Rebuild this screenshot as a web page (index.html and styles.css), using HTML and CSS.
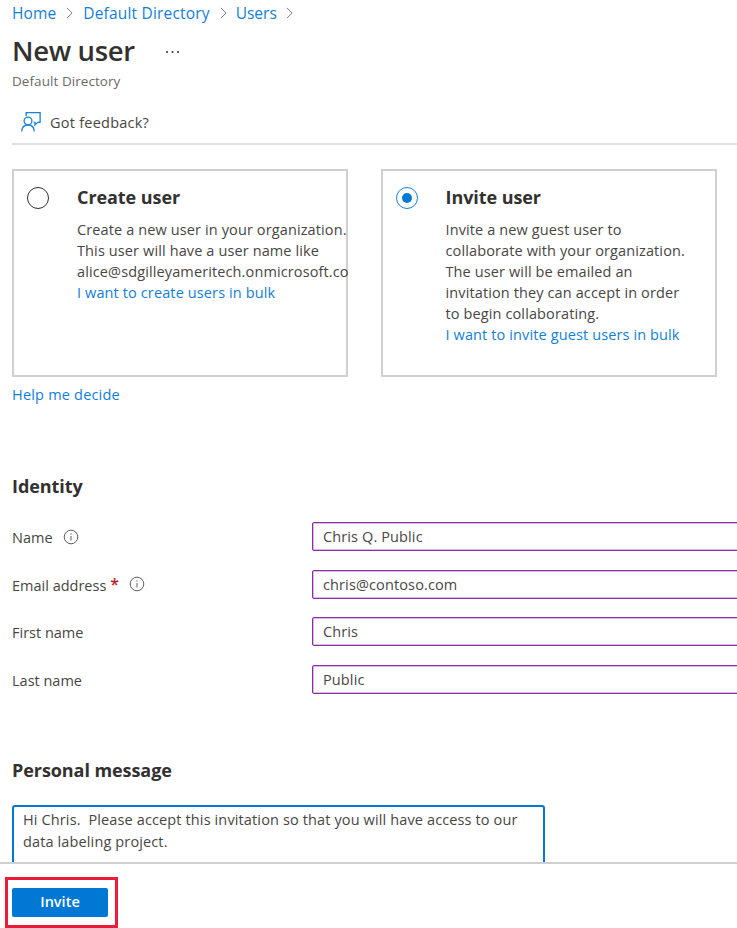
FILE: index.html
```html
<!DOCTYPE html>
<html lang="en">
<head>
<meta charset="utf-8">
<title>New user</title>
<link rel="stylesheet" href="styles.css">
</head>
<body>
<div class="page">
  <main class="content">
    <nav class="breadcrumb">
      <a href="#">Home</a>
      <svg class="chevron" viewBox="0 0 8 14"><path d="M1 1l6 6-6 6"/></svg>
      <a class="crumb-dir" href="#">Default Directory</a>
      <svg class="chevron" viewBox="0 0 8 14"><path d="M1 1l6 6-6 6"/></svg>
      <a class="crumb-users" href="#">Users</a>
      <svg class="chevron" viewBox="0 0 8 14"><path d="M1 1l6 6-6 6"/></svg>
    </nav>
    <header class="heading">
      <h1>New user</h1>
      <svg class="more" viewBox="0 0 16 4"><circle cx="2" cy="2" r="1"/><circle cx="7.5" cy="2" r="1"/><circle cx="13" cy="2" r="1"/></svg>
    </header>
    <p class="subtitle"><span>Default Directory</span></p>
    <div class="toolbar">
      <svg class="feedback-icon" viewBox="0 0 20 20"><path d="M5.200 4V.7h13.900v9.600h-2.200l-2.900 2.600v-2.600h-1.300"/><circle cx="7" cy="9" r="3.900"/><path d="M.7 19.500c.2-4 2.600-6.500 6.300-6.500s6.100 2.500 6.300 6.500"/></svg>
      <span>Got feedback?</span>
    </div>

    <section class="choices">
      <div class="card">
        <span class="radio"></span>
        <div class="card-body">
          <h2>Create user</h2>
          <p>Create a new user in your organization.<br>This user will have a user name like<br>alice@sdgilleyameritech.onmicrosoft.co<br><a href="#">I want to create users in bulk</a></p>
        </div>
      </div>
      <div class="card">
        <span class="radio checked"></span>
        <div class="card-body">
          <h2>Invite user</h2>
          <p>Invite a new guest user to<br>collaborate with your organization.<br>The user will be emailed an<br>invitation they can accept in order<br>to begin collaborating.<br><a href="#">I want to invite guest users in bulk</a></p>
        </div>
      </div>
    </section>
    <div class="help"><a href="#">Help me decide</a></div>

    <h2 class="identity-title">Identity</h2>
    <div class="field">
      <div class="label"><span>Name</span><svg class="info" viewBox="0 0 16 16"><circle cx="8" cy="8" r="6.800"/><path d="M8 7v4.500M8 4.400v1.300"/></svg></div>
      <div class="input">Chris Q. Public</div>
    </div>
    <div class="field">
      <div class="label"><span>Email address</span><span class="required">*</span><svg class="info" viewBox="0 0 16 16"><circle cx="8" cy="8" r="6.800"/><path d="M8 7v4.500M8 4.400v1.300"/></svg></div>
      <div class="input">chris@contoso.com</div>
    </div>
    <div class="field">
      <div class="label">First name</div>
      <div class="input">Chris</div>
    </div>
    <div class="field">
      <div class="label">Last name</div>
      <div class="input">Public</div>
    </div>

    <h2 class="message-title">Personal message</h2>
    <div class="message">Hi Chris.&nbsp; Please accept this invitation so that you will have access to our<br>data labeling project.</div>
  </main>
  <footer class="footer">
    <div class="highlight"><button class="invite" type="button">Invite</button></div>
  </footer>
</div>
</body>
</html>
```
FILE: styles.css
```css
* { box-sizing: border-box; }
body { margin: 0; background: #fff; color: #484644; font: 14.5px/21px "Open Sans", "Noto Sans", sans-serif; letter-spacing: .12px; overflow: hidden; }
h1, h2, p { margin: 0; }
h1, h2 { color: #323130; font-weight: 600; }
h2 { font-size: 18px; line-height: 24px; font-weight: 700; letter-spacing: -.07px; }
a { color: #1280d8; text-decoration: none; }
svg { flex: none; fill: none; overflow: visible; }
span, a, h1, h2, p { white-space: nowrap; }
.page { height: 928px; display: flex; flex-direction: column; }
.content { height: 862px; padding-left: 12px; overflow: hidden; }

.breadcrumb { display: flex; align-items: center; height: 26px; font-size: 15.5px; }
.crumb-dir { letter-spacing: .18px; }
.crumb-users { margin-left: -1px; letter-spacing: 0; }
.chevron { width: 7px; height: 12px; margin: -1px 10px 0; stroke: #777; stroke-width: 1.1; }
.breadcrumb .chevron:last-child { margin-left: 9px; }
.heading { display: flex; align-items: center; height: 45px; padding-top: 5px; }
.heading h1 { width: 153px; font-size: 27.5px; line-height: 40px; letter-spacing: -.35px; }
.more { width: 16px; height: 4px; margin-top: 2px; fill: #323130; }
.subtitle { height: 20px; line-height: 20px; font-size: 13.5px; color: #6c6a68; letter-spacing: .06px; }
.toolbar { display: flex; align-items: center; gap: 9px; height: 54px; margin-bottom: 24px; padding: 11px 0 0 9px; border-bottom: 2px solid #dfdfdf; letter-spacing: .24px; }
.feedback-icon { width: 20px; height: 20px; margin-top: -1px; stroke: #1683d9; stroke-width: 1.3; }

.choices { display: flex; gap: 32.5px; }
.card { display: flex; width: 336px; height: 208px; padding: 14px 0 0 13px; border: 2px solid #d0d0d0; }
.radio { display: grid; place-items: center; flex: none; width: 22px; height: 22px; margin: 2px 28px 0 0; border: 1px solid #323130; border-radius: 50%; }
.radio.checked { border-color: #1683d9; }
.radio.checked::after { content: ""; width: 10px; height: 10px; border-radius: 50%; background: #0078d4; }
.card-body h2 { margin-bottom: 10px; }
.help { height: 35px; padding-top: 7px; letter-spacing: .2px; }

.identity-title { height: 39px; margin-top: 62px; }
.field { display: grid; grid-template-columns: 300px 1fr; align-items: center; height: 47.5px; }
.label { display: flex; align-items: center; padding-top: 2px; letter-spacing: 0; }
.info { width: 16px; height: 16px; margin: -2px 0 0 10px; stroke: #605e5c; stroke-width: 1; }
.required { margin: -2px 0 0 4px; color: #b21e28; font-weight: 600; font-size: 16px; }
.input { height: 29px; margin-right: -4px; padding: 3px 10px; border: 1px solid #8a2da5; border-radius: 2px; box-shadow: inset 0 0 0 .5px #b77bc9; }

.message-title { height: 47px; margin-top: 55px; }
.message { width: 533px; height: 90px; padding: 2px 9px; border: 2px solid #0078d4; border-radius: 3px; line-height: 22px; letter-spacing: .13px; }
.footer { height: 66px; padding: 13px 5px 0; border-top: 2px solid #cfcfcf; }
.highlight { width: 113px; height: 51px; padding: 8px 4px; border: 3px solid #eb1c3b; }
.invite { display: block; width: 96px; height: 29px; padding: 0 0 2px; border: 0; border-radius: 2px; background: #0078d4; color: #fff; font: 600 14.5px/27px "Open Sans", sans-serif; }
```
